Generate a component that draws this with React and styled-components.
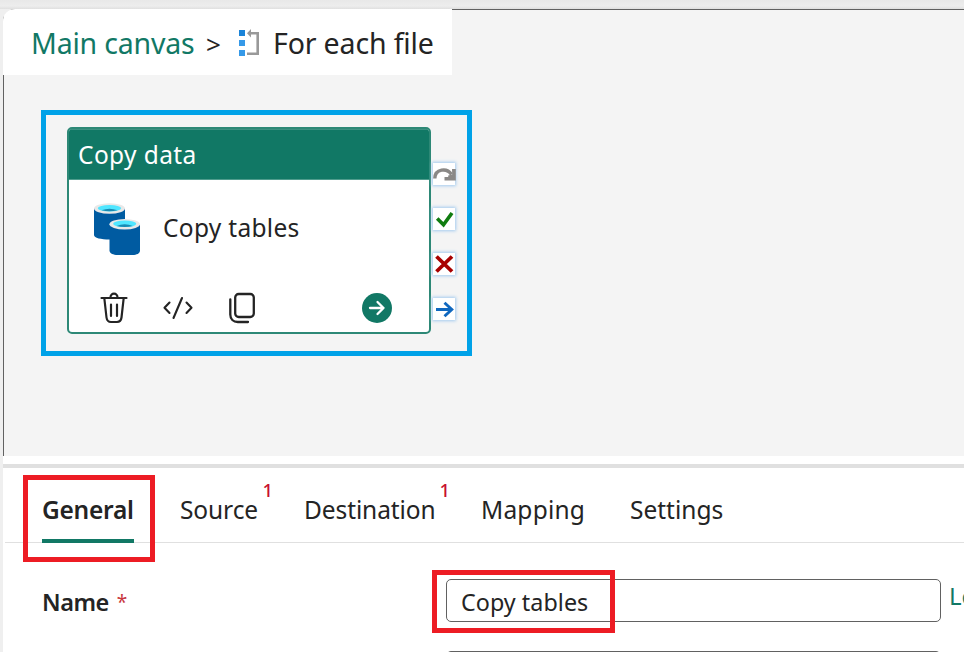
import React from "react";
import styled, { createGlobalStyle } from "styled-components";

const GlobalStyle = createGlobalStyle`
  * { box-sizing: border-box; }
  body { margin: 0; overflow: hidden; background: #efefef; font-family: "Noto Sans", "Open Sans", sans-serif; color: #242424; }
  svg { display: block; }
`;

const Page = styled.div`
  width: 964px;
  height: 652px;
  overflow: hidden;
  padding: 9px 0 0 3px;
  background: linear-gradient(#e8e8e8, #ededed 6px, #dfdfdf 9px, #efefef 9px);
`;

const Canvas = styled.main`
  height: 447px;
  border-top-left-radius: 12px;
  background: linear-gradient(#616161, #616161) 0 0 / 1px 100% no-repeat,
    linear-gradient(#616161, #616161) 0 0 / 100% 1px no-repeat, #f4f4f4;
`;

const Breadcrumb = styled.nav`
  display: flex;
  align-items: center;
  width: 449px;
  height: 66px;
  padding: 1px 0 0 28px;
  border-top-left-radius: 12px;
  background: #fff;
  font-size: 28.5px;
  line-height: 40px;
  white-space: nowrap;
`;

const CrumbLink = styled.a`
  width: 174px;
  color: #117865;
  letter-spacing: -0.2px;
`;

const Separator = styled.span`
  width: 34px;
  padding: 2px 0 0 1px;
  font-size: 26px;
`;

const CrumbCurrent = styled.span`
  margin-left: 12px;
  letter-spacing: -0.15px;
`;

const Selection = styled.section`
  display: flex;
  width: 431px;
  height: 246px;
  margin: 35px 0 0 38px;
  padding: 12px 0 0 21px;
  border: 5px solid #00a2e8;
`;

const Card = styled.article`
  display: flex;
  flex-direction: column;
  width: 364px;
  height: 207px;
  border: 2px solid #2d8876;
  border-radius: 5px;
  background: #fff;
  overflow: hidden;
`;

const CardHeader = styled.header`
  flex: none;
  height: 51px;
  padding: 1px 0 0 9px;
  background: #117865;
  border-top: 1px solid #3d9181;
  border-bottom: 1px solid #4f9c8d;
  color: #fff;
  font-size: 24.5px;
  line-height: 47px;
  letter-spacing: 0.4px;
`;

const CardBody = styled.div`
  display: flex;
  height: 98px;
  padding: 23px 0 0 25px;
`;

const CardTitle = styled.span`
  margin: 5px 0 0 22px;
  font-size: 24.5px;
  line-height: 40px;
  letter-spacing: 0.3px;
`;

const CardActions = styled.div`
  display: flex;
  align-items: center;
  height: 54px;
  padding: 5px 37px 0 28px;
`;

const ActionButton = styled.button`
  display: flex;
  justify-content: center;
  width: 34px;
  margin-right: 30px;
  padding: 0;
  border: 0;
  background: none;
`;

const RunButton = styled(ActionButton)`
  width: 30px;
  margin: 0 0 0 auto;
`;

const Ports = styled.div`
  display: flex;
  flex-direction: column;
  gap: 23px;
  margin: 36px 0 0 2px;
`;

const Port = styled.div`
  width: 22px;
  height: 22px;
  background: #fff;
  box-shadow: 0 0 3px 1px #a3cbef;
`;

const Properties = styled.section`
  position: relative;
  height: 196px;
  padding-top: 8px;
  background: #fff;
`;

const Splitter = styled.div`
  height: 4px;
  background: #e0e0e0;
`;

const Tabs = styled.div`
  display: flex;
  height: 75px;
  margin-left: 2px;
  padding-left: 37px;
  border-bottom: 1px solid #e0e0e0;
`;

const Tab = styled.button`
  position: relative;
  flex: none;
  width: ${(p) => p.$width}px;
  margin-right: ${(p) => p.$gap}px;
  height: 75px;
  padding: 13px 0 0;
  border: 0;
  border-bottom: 4px solid ${(p) => (p.$active ? "#117865" : "transparent")};
  background: none;
  color: #242424;
  font-family: inherit;
  font-size: 24.5px;
  font-weight: ${(p) => (p.$active ? 600 : 400)};
  letter-spacing: ${(p) => p.$spacing}px;
  line-height: 58px;
  text-align: left;
  white-space: nowrap;
`;

const Count = styled.sup`
  position: absolute;
  right: -14px;
  top: 10px;
  color: #c8102e;
  font-size: 18.5px;
  font-weight: 500;
  line-height: 24px;
  letter-spacing: 0;
`;

const FieldRow = styled.div`
  display: flex;
  height: 43px;
  margin-top: 36px;
  padding-left: 39px;
`;

const Label = styled.label`
  flex: none;
  width: 404px;
  padding-top: 3px;
  font-size: 23.5px;
  font-weight: 600;
  line-height: 40px;
  letter-spacing: -0.5px;
`;

const Required = styled.span`
  margin-left: 8px;
  color: #c8373d;
  font-size: 19px;
  font-weight: 400;
  vertical-align: 2px;
  line-height: 1;
`;

const TextField = styled.div`
  flex: none;
  width: 495px;
  height: 43px;
  padding: 2px 0 0 14px;
  border: 1px solid #616161;
  border-radius: 5px;
  font-size: 23.3px;
  line-height: 41px;
  letter-spacing: 0.05px;
`;

const NextField = styled(TextField)`
  margin: 29px 0 0 443px;
`;

const LearnLink = styled.a`
  flex: none;
  margin-left: 8px;
  color: #117865;
  font-size: 24px;
  line-height: 34px;
  white-space: nowrap;
`;

const Highlight = styled.div`
  position: absolute;
  left: ${(p) => p.$left}px;
  top: ${(p) => p.$top}px;
  width: ${(p) => p.$width}px;
  height: ${(p) => p.$height}px;
  border: 5px solid #ed1c24;
  pointer-events: none;
`;

const tabs = [
  { label: "General", width: 92, gap: 46, spacing: -0.25, active: true },
  { label: "Source", width: 79, gap: 45, spacing: -0.1, count: 1 },
  { label: "Destination", width: 132, gap: 45, spacing: -0.1, count: 1 },
  { label: "Mapping", width: 104, gap: 45, spacing: 0.2 },
  { label: "Settings", width: 94, gap: 0, spacing: 0 },
];

const ForEachIcon = () => (
  <svg width="22" height="28" viewBox="0 0 22 28">
    <path fill="#1b84d8" d="M0 1h6v6H0z" />
    <path fill="#3599e8" d="M0 11h6v6H0zM0 21h6v6H0z" />
    <path fill="none" stroke="#999" strokeWidth="2.6" d="M10 4.3h8.7v20.400H8" />
    <path fill="#999" d="M8 4.300 12 0v8.600z" />
  </svg>
);

const DatabaseIcon = () => (
  <svg width="47" height="53" viewBox="0 0 47 53">
    <path fill="#005ba1" d="M0 5v27c0 3 7 4.500 15.500 4.500S31 35 31 32V5z" />
    <ellipse cx="15.500" cy="5.500" rx="15.500" ry="5.300" fill="#e8e8e8" />
    <ellipse cx="15.500" cy="5.200" rx="11.700" ry="3.200" fill="#50e6ff" />
    <path fill="#198ab3" d="M7.500 7.300Q15.500 4 23.500 7.300 15.500 9.300 7.500 7.300z" />
    <path fill="#005ba1" d="M15.500 21v26.500c0 3 4 4.500 8 4.500h15c4 0 7.500-1.500 7.500-4.500V21z" />
    <ellipse cx="30.700" cy="21.200" rx="15.300" ry="5.200" fill="#e8e8e8" />
    <ellipse cx="30.700" cy="20.800" rx="11.600" ry="3.300" fill="#50e6ff" />
    <path fill="#198ab3" d="M22.700 23Q30.700 19.700 38.700 23 30.700 25 22.700 23z" />
  </svg>
);

const TrashIcon = () => (
  <svg width="28" height="32" viewBox="0 0 28 32" fill="none" stroke="#242424" strokeWidth="2.200" strokeLinecap="round">
    <path d="M1.500 6h25M10.500 5.500a3.500 3.800 0 0 1 7 0M4.300 6l2.200 19.500c.4 3 2 4.500 4.500 4.500h6c2.500 0 4.100-1.500 4.500-4.500L23.700 6M11 12.500V24M17 12.500V24" />
  </svg>
);

const CodeIcon = () => (
  <svg width="30" height="24" viewBox="0 0 30 24" fill="none" stroke="#242424" strokeWidth="2.100" strokeLinecap="round" strokeLinejoin="round">
    <path d="M6.500 6.500 1.500 11.800l5 5.200M23.500 6.500l5 5.300-5 5.200M19 2l-8.500 20" />
  </svg>
);

const CopyIcon = () => (
  <svg width="28" height="32" viewBox="0 0 28 32" fill="none" stroke="#242424" strokeWidth="2.300" strokeLinecap="round">
    <rect x="7.200" y="2" width="18.600" height="23" rx="3.500" />
    <path d="M2.300 7.500v15c0 4.500 3 7.500 7.500 7.500H20" />
  </svg>
);

const RunIcon = () => (
  <svg width="30" height="30" viewBox="0 0 30 30" fill="none">
    <circle cx="15" cy="15" r="15" fill="#117865" />
    <path stroke="#fff" strokeWidth="2.300" strokeLinecap="round" strokeLinejoin="round" d="M8 15h13.500M15.500 9l6 6-6 6" />
  </svg>
);

const SkipIcon = () => (
  <svg width="23" height="22" viewBox="0 0 23 22">
    <path fill="none" stroke="#8a8886" strokeWidth="3.400" d="M1.800 15.500C2 5.500 14 4.500 18.500 11.500" />
    <path fill="#8a8886" d="M22.800 6v11.500H11.500V14h3.700v-1.500l4-1L19 6z" />
  </svg>
);

const SuccessIcon = () => (
  <svg width="23" height="22" viewBox="0 0 23 22">
    <path fill="none" stroke="#107c10" strokeWidth="3.600" d="m4.200 10.500 6.300 6.300L19 5" />
  </svg>
);

const FailIcon = () => (
  <svg width="23" height="22" viewBox="0 0 23 22">
    <path stroke="#a80000" strokeWidth="3.800" d="m3.500 3.500 15.500 15M19 3.500l-15.500 15" />
  </svg>
);

const CompletionIcon = () => (
  <svg width="23" height="22" viewBox="0 0 23 22">
    <path fill="none" stroke="#1068bf" strokeWidth="2.900" d="M3 11.500h16.500M11.500 4.700l7.300 6.800-7.300 6.800" />
  </svg>
);

export default function App() {
  return (
    <Page>
      <GlobalStyle />
      <Canvas>
        <Breadcrumb>
          <CrumbLink>Main canvas</CrumbLink>
          <Separator>&gt;</Separator>
          <ForEachIcon />
          <CrumbCurrent>For each file</CrumbCurrent>
        </Breadcrumb>
        <Selection>
          <Card>
            <CardHeader>Copy data</CardHeader>
            <CardBody>
              <DatabaseIcon />
              <CardTitle>Copy tables</CardTitle>
            </CardBody>
            <CardActions>
              <ActionButton aria-label="Delete"><TrashIcon /></ActionButton>
              <ActionButton aria-label="View code"><CodeIcon /></ActionButton>
              <ActionButton aria-label="Clone"><CopyIcon /></ActionButton>
              <RunButton aria-label="Run"><RunIcon /></RunButton>
            </CardActions>
          </Card>
          <Ports>
            <Port><SkipIcon /></Port>
            <Port><SuccessIcon /></Port>
            <Port><FailIcon /></Port>
            <Port><CompletionIcon /></Port>
          </Ports>
        </Selection>
      </Canvas>
      <Properties>
        <Splitter />
        <Tabs>
          {tabs.map((t) => (
            <Tab key={t.label} $width={t.width} $gap={t.gap} $spacing={t.spacing} $active={t.active}>
              {t.label}
              {t.count && <Count>{t.count}</Count>}
            </Tab>
          ))}
        </Tabs>
        <FieldRow>
          <Label>Name<Required>*</Required></Label>
          <TextField>Copy tables</TextField>
          <LearnLink>Learn more</LearnLink>
        </FieldRow>
        <NextField />
        <Highlight $left={20} $top={19} $width={132} $height={87} />
        <Highlight $left={429} $top={114} $width={183} $height={63} />
      </Properties>
    </Page>
  );
}
